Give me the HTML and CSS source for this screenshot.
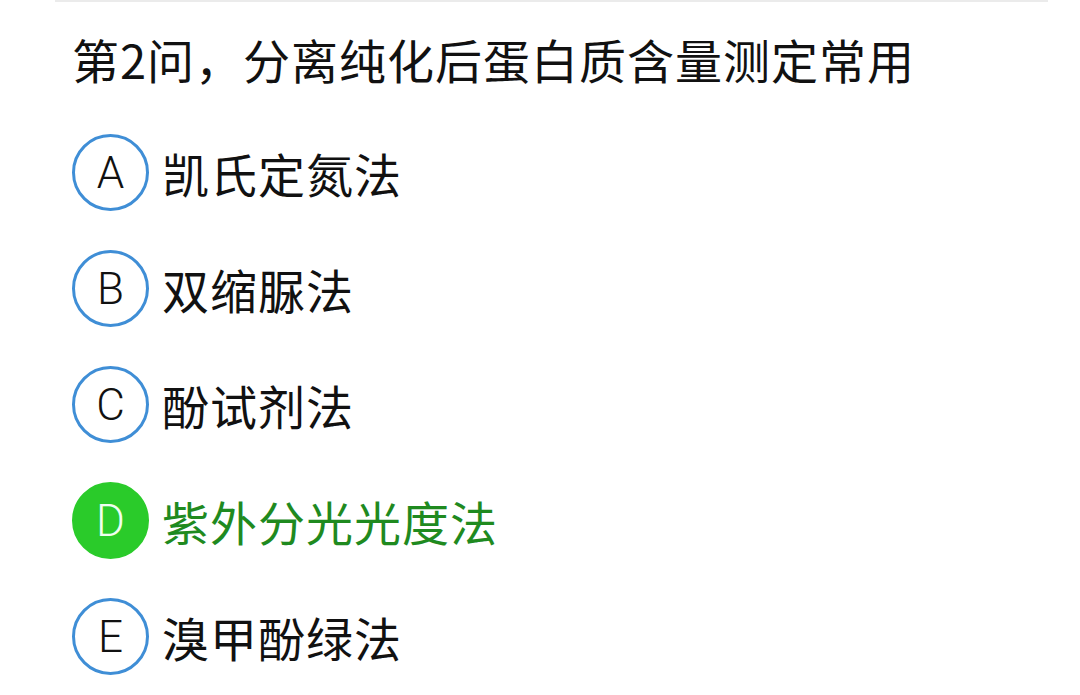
FILE: index.html
```html
<!DOCTYPE html>
<html lang="zh-CN">
<head>
  <meta charset="UTF-8">
  <meta name="viewport" content="width=device-width, initial-scale=1.0">
  <title>第2问</title>
  <link rel="stylesheet" href="styles.css">
</head>
<body>
  <div class="divider"></div>
  <div class="question">
    <h2 class="title">第2问，分离纯化后蛋白质含量测定常用</h2>
    <div class="options">
      <div class="option">
        <span class="badge">A</span>
        <span class="label">凯氏定氮法</span>
      </div>
      <div class="option">
        <span class="badge">B</span>
        <span class="label">双缩脲法</span>
      </div>
      <div class="option">
        <span class="badge">C</span>
        <span class="label">酚试剂法</span>
      </div>
      <div class="option correct">
        <span class="badge">D</span>
        <span class="label">紫外分光光度法</span>
      </div>
      <div class="option">
        <span class="badge">E</span>
        <span class="label">溴甲酚绿法</span>
      </div>
    </div>
  </div>
</body>
</html>
```

FILE: styles.css
```css
body {
  margin: 0;
  background: #fff;
  font-family: "Noto Sans CJK SC", "Noto Sans", sans-serif;
  color: #111;
}
.divider {
  margin-left: 55px;
  width: 993px;
  height: 2px;
  background: #ebebeb;
}
.question {
  padding: 27px 0 0 72px;
}
.title {
  margin: 0;
  font-size: 47px;
  font-weight: normal;
  line-height: 60px;
  letter-spacing: 1px;
}
.options {
  display: flex;
  flex-direction: column;
  gap: 39px;
  margin-top: 45px;
}
.option {
  display: flex;
  align-items: center;
  gap: 13px;
  height: 77px;
}
.badge {
  box-sizing: border-box;
  width: 77px;
  height: 77px;
  border: 3px solid #3f8ed6;
  border-radius: 50%;
  display: flex;
  justify-content: center;
  align-items: center;
  font-family: Roboto, "Liberation Sans", sans-serif;
  font-weight: 300;
  font-size: 44px;
  line-height: 1;
  color: #111;
}
.label {
  font-size: 47px;
  line-height: 60px;
  letter-spacing: 1px;
}
.correct .badge {
  background: #2acb2a;
  border-color: #2acb2a;
  color: #effff0;
}
.correct .label {
  color: #1f8a1f;
}
```
